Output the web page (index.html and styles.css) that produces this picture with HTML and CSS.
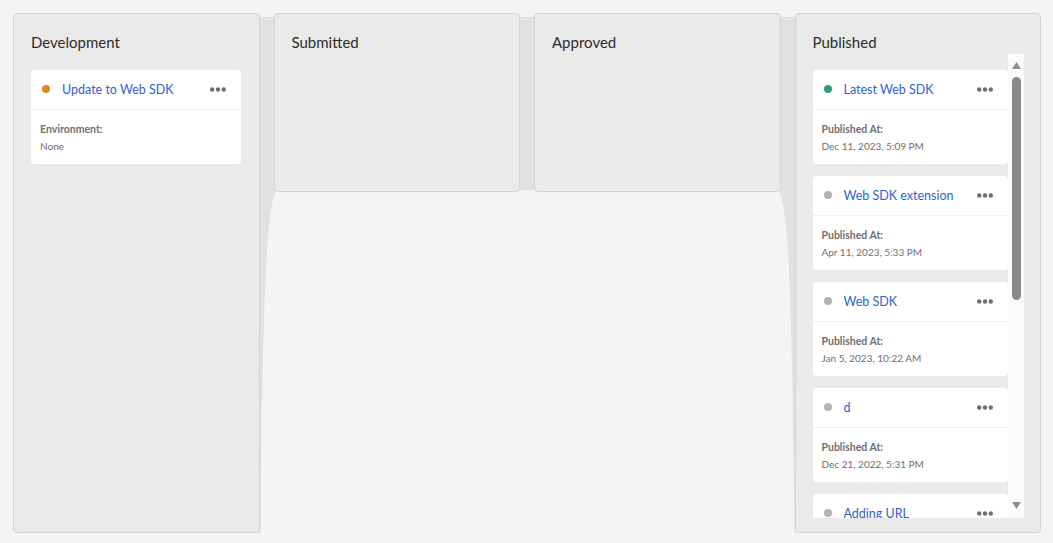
FILE: index.html
```html
<!DOCTYPE html>
<html lang="en">
<head>
<meta charset="utf-8">
<title>Library board</title>
<link rel="stylesheet" href="styles.css">
</head>
<body>
<div class="board">
  <section class="column column-tall column-dev">
    <h2 class="column-title">Development</h2>
    <div class="column-body">
      <div class="card-list">
        <article class="card">
          <div class="card-head">
            <span class="dot dot-orange"></span>
            <a class="card-title">Update to Web SDK</a>
            <svg class="more" viewBox="0 0 16 5" width="16" height="5"><circle cx="2.2" cy="2.5" r="2.2"/><circle cx="8" cy="2.5" r="2.2"/><circle cx="13.8" cy="2.5" r="2.2"/></svg>
          </div>
          <div class="card-body">
            <div class="label">Environment:</div>
            <div class="value">None</div>
          </div>
        </article>
      </div>
    </div>
  </section>

  <div class="connector">
    <svg viewBox="0 0 14 520" preserveAspectRatio="none"><path d="M0 4 H14 V178 C 8 195, 4 240, 2 520 H0 Z"/></svg>
  </div>

  <section class="column column-short">
    <h2 class="column-title">Submitted</h2>
  </section>

  <div class="connector">
    <svg viewBox="0 0 14 520" preserveAspectRatio="none"><path d="M0 4 H14 V177 H0 Z"/></svg>
  </div>

  <section class="column column-short">
    <h2 class="column-title">Approved</h2>
  </section>

  <div class="connector">
    <svg viewBox="0 0 14 520" preserveAspectRatio="none"><path d="M0 4 H14 V520 H12 C 10 240, 6 195, 0 178 Z"/></svg>
  </div>

  <section class="column column-tall">
    <h2 class="column-title">Published</h2>
    <div class="column-body">
      <div class="card-list">
        <article class="card">
          <div class="card-head">
            <span class="dot dot-green"></span>
            <a class="card-title">Latest Web SDK</a>
            <svg class="more" viewBox="0 0 16 5" width="16" height="5"><circle cx="2.2" cy="2.5" r="2.2"/><circle cx="8" cy="2.5" r="2.2"/><circle cx="13.8" cy="2.5" r="2.2"/></svg>
          </div>
          <div class="card-body">
            <div class="label">Published At:</div>
            <div class="value">Dec 11, 2023, 5:09 PM</div>
          </div>
        </article>
        <article class="card">
          <div class="card-head">
            <span class="dot dot-gray"></span>
            <a class="card-title">Web SDK extension</a>
            <svg class="more" viewBox="0 0 16 5" width="16" height="5"><circle cx="2.2" cy="2.5" r="2.2"/><circle cx="8" cy="2.5" r="2.2"/><circle cx="13.8" cy="2.5" r="2.2"/></svg>
          </div>
          <div class="card-body">
            <div class="label">Published At:</div>
            <div class="value">Apr 11, 2023, 5:33 PM</div>
          </div>
        </article>
        <article class="card">
          <div class="card-head">
            <span class="dot dot-gray"></span>
            <a class="card-title">Web SDK</a>
            <svg class="more" viewBox="0 0 16 5" width="16" height="5"><circle cx="2.2" cy="2.5" r="2.2"/><circle cx="8" cy="2.5" r="2.2"/><circle cx="13.8" cy="2.5" r="2.2"/></svg>
          </div>
          <div class="card-body">
            <div class="label">Published At:</div>
            <div class="value">Jan 5, 2023, 10:22 AM</div>
          </div>
        </article>
        <article class="card">
          <div class="card-head">
            <span class="dot dot-gray"></span>
            <a class="card-title">d</a>
            <svg class="more" viewBox="0 0 16 5" width="16" height="5"><circle cx="2.2" cy="2.5" r="2.2"/><circle cx="8" cy="2.5" r="2.2"/><circle cx="13.8" cy="2.5" r="2.2"/></svg>
          </div>
          <div class="card-body">
            <div class="label">Published At:</div>
            <div class="value">Dec 21, 2022, 5:31 PM</div>
          </div>
        </article>
        <article class="card">
          <div class="card-head">
            <span class="dot dot-gray"></span>
            <a class="card-title">Adding URL</a>
            <svg class="more" viewBox="0 0 16 5" width="16" height="5"><circle cx="2.2" cy="2.5" r="2.2"/><circle cx="8" cy="2.5" r="2.2"/><circle cx="13.8" cy="2.5" r="2.2"/></svg>
          </div>
          <div class="card-body">
            <div class="label">Published At:</div>
            <div class="value">Dec 20, 2022, 3:12 PM</div>
          </div>
        </article>
      </div>
      <div class="scrollbar">
        <svg class="arrow" viewBox="0 0 9 7" width="9" height="7"><path d="M4.5 0 L9 7 H0 Z"/></svg>
        <div class="thumb-track"><div class="thumb"></div></div>
        <svg class="arrow" viewBox="0 0 9 7" width="9" height="7"><path d="M0 0 H9 L4.5 7 Z"/></svg>
      </div>
    </div>
  </section>
</div>
</body>
</html>
```

FILE: styles.css
```css
* { box-sizing: border-box; }

html, body {
  margin: 0;
  padding: 0;
  background: #f4f4f4;
  font-family: "Lato", "Noto Sans", sans-serif;
  overflow: hidden;
}

body {
  padding: 13px 12px 0 13px;
}

.board {
  display: grid;
  grid-template-columns: 1fr 14px 1fr 14px 1fr 14px 1fr;
  grid-template-rows: 520px;
  height: 520px;
}

.column {
  position: relative;
  z-index: 1;
  background: #eaeaea;
  border: 1px solid #d3d3d3;
  border-radius: 4px;
  display: flex;
  flex-direction: column;
  padding: 0 16px 14px 17px;
  min-width: 0;
  min-height: 0;
  overflow: hidden;
}

.column-dev {
  padding-right: 18px;
}

.column-short {
  align-self: start;
  height: 179px;
}

.column-title {
  flex: none;
  margin: 18px 0 2px;
  font-size: 15px;
  line-height: 20px;
  font-weight: 400;
  color: #2c2c2c;
}

.connector {
  margin: 0 -2px;
  min-height: 0;
}

.connector svg {
  display: block;
  width: 100%;
  height: 100%;
}

.connector path {
  fill: #e1e1e1;
}

.column-body {
  flex: 1;
  display: flex;
  min-height: 0;
}

.card-list {
  flex: 1;
  min-width: 0;
  min-height: 0;
  overflow: hidden;
  padding-top: 16px;
  display: flex;
  flex-direction: column;
  gap: 12px;
}

.card {
  flex: none;
  background: #fff;
  border-radius: 4px;
  height: 94px;
}

.card-head {
  height: 40px;
  border-bottom: 1px solid #efefef;
  display: flex;
  align-items: center;
  padding: 0 15px 1px 11px;
}

.dot {
  width: 8px;
  height: 8px;
  border-radius: 50%;
  flex: none;
  margin-right: 12px;
}

.dot-orange { background: #e68619; }
.dot-green { background: #2d9d78; }
.dot-gray { background: #b3b3b3; }

.card-title {
  flex: 1;
  font-size: 12.5px;
  color: #2f5fd2;
  text-decoration: none;
  white-space: nowrap;
  overflow: hidden;
}

.more {
  flex: none;
  fill: #6e6e6e;
}

.card-body {
  padding: 11px 9px 8px;
  font-size: 10px;
  line-height: 17px;
  color: #707070;
}

.label {
  font-weight: 700;
  font-size: 10.5px;
}

.scrollbar {
  width: 16px;
  flex: none;
  background: #fbfbfb;
  display: flex;
  flex-direction: column;
  align-items: center;
  padding: 8px 0 9px;
}

.arrow {
  flex: none;
  fill: #8e8e8e;
  display: block;
}

.thumb-track {
  flex: 1;
  width: 9px;
  padding-top: 8px;
}

.thumb {
  height: 223px;
  background: #8a8a8a;
  border-radius: 5px;
}
```
